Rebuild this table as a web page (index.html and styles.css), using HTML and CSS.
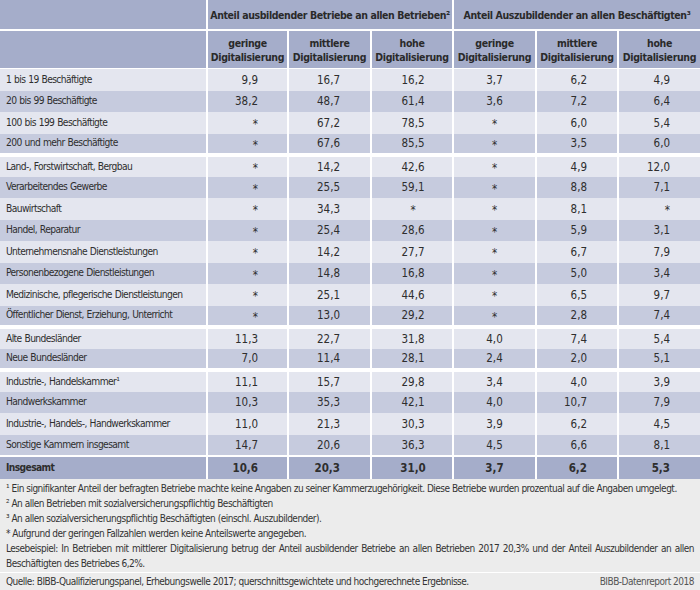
FILE: index.html
```html
<!DOCTYPE html>
<html lang="de">
<head>
<meta charset="utf-8">
<title>BIBB-Datenreport 2018</title>
<link rel="stylesheet" href="styles.css">
</head>
<body>
<div class="page">
  <table class="data">
    <colgroup>
      <col class="c-label">
      <col class="c-w81">
      <col class="c-w83">
      <col class="c-w82">
      <col class="c-w83">
      <col class="c-w82">
      <col class="c-w83">
    </colgroup>
    <thead>
      <tr class="h1">
        <th class="blank"></th>
        <th colspan="3" class="grp">Anteil ausbildender Betriebe an allen Betrieben²</th>
        <th colspan="3" class="grp">Anteil Auszubildender an allen Beschäftigten³</th>
      </tr>
      <tr class="h2">
        <th class="blank"></th>
        <th>geringe<br>Digitalisierung</th>
        <th>mittlere<br>Digitalisierung</th>
        <th>hohe<br>Digitalisierung</th>
        <th>geringe<br>Digitalisierung</th>
        <th>mittlere<br>Digitalisierung</th>
        <th>hohe<br>Digitalisierung</th>
      </tr>
    </thead>
    <tbody>
      <tr class="lt"><td>1 bis 19 Beschäftigte</td><td>9,9</td><td>16,7</td><td>16,2</td><td>3,7</td><td>6,2</td><td>4,9</td></tr>
      <tr class="dk"><td>20 bis 99 Beschäftigte</td><td>38,2</td><td>48,7</td><td>61,4</td><td>3,6</td><td>7,2</td><td>6,4</td></tr>
      <tr class="lt"><td>100 bis 199 Beschäftigte</td><td><span class="na">*</span></td><td>67,2</td><td>78,5</td><td><span class="na">*</span></td><td>6,0</td><td>5,4</td></tr>
      <tr class="dk end"><td>200 und mehr Beschäftigte</td><td><span class="na">*</span></td><td>67,6</td><td>85,5</td><td><span class="na">*</span></td><td>3,5</td><td>6,0</td></tr>
      <tr class="lt start"><td>Land-, Forstwirtschaft, Bergbau</td><td><span class="na">*</span></td><td>14,2</td><td>42,6</td><td><span class="na">*</span></td><td>4,9</td><td>12,0</td></tr>
      <tr class="dk"><td>Verarbeitendes Gewerbe</td><td><span class="na">*</span></td><td>25,5</td><td>59,1</td><td><span class="na">*</span></td><td>8,8</td><td>7,1</td></tr>
      <tr class="lt"><td>Bauwirtschaft</td><td><span class="na">*</span></td><td>34,3</td><td><span class="na">*</span></td><td><span class="na">*</span></td><td>8,1</td><td><span class="na">*</span></td></tr>
      <tr class="dk"><td>Handel, Reparatur</td><td><span class="na">*</span></td><td>25,4</td><td>28,6</td><td><span class="na">*</span></td><td>5,9</td><td>3,1</td></tr>
      <tr class="lt"><td>Unternehmensnahe Dienstleistungen</td><td><span class="na">*</span></td><td>14,2</td><td>27,7</td><td><span class="na">*</span></td><td>6,7</td><td>7,9</td></tr>
      <tr class="dk"><td>Personenbezogene Dienstleistungen</td><td><span class="na">*</span></td><td>14,8</td><td>16,8</td><td><span class="na">*</span></td><td>5,0</td><td>3,4</td></tr>
      <tr class="lt"><td>Medizinische, pflegerische Dienstleistungen</td><td><span class="na">*</span></td><td>25,1</td><td>44,6</td><td><span class="na">*</span></td><td>6,5</td><td>9,7</td></tr>
      <tr class="dk end"><td>Öffentlicher Dienst, Erziehung, Unterricht</td><td><span class="na">*</span></td><td>13,0</td><td>29,2</td><td><span class="na">*</span></td><td>2,8</td><td>7,4</td></tr>
      <tr class="lt start"><td>Alte Bundesländer</td><td>11,3</td><td>22,7</td><td>31,8</td><td>4,0</td><td>7,4</td><td>5,4</td></tr>
      <tr class="dk end"><td>Neue Bundesländer</td><td>7,0</td><td>11,4</td><td>28,1</td><td>2,4</td><td>2,0</td><td>5,1</td></tr>
      <tr class="lt start"><td>Industrie-, Handelskammer¹</td><td>11,1</td><td>15,7</td><td>29,8</td><td>3,4</td><td>4,0</td><td>3,9</td></tr>
      <tr class="dk"><td>Handwerkskammer</td><td>10,3</td><td>35,3</td><td>42,1</td><td>4,0</td><td>10,7</td><td>7,9</td></tr>
      <tr class="lt"><td>Industrie-, Handels-, Handwerkskammer</td><td>11,0</td><td>21,3</td><td>30,3</td><td>3,9</td><td>6,2</td><td>4,5</td></tr>
      <tr class="dk end-thin"><td>Sonstige Kammern insgesamt</td><td>14,7</td><td>20,6</td><td>36,3</td><td>4,5</td><td>6,6</td><td>8,1</td></tr>
      <tr class="total start-thin"><td>Insgesamt</td><td>10,6</td><td>20,3</td><td>31,0</td><td>3,7</td><td>6,2</td><td>5,3</td></tr>
    </tbody>
  </table>
  <div class="notes">
    <p>¹ Ein signifikanter Anteil der befragten Betriebe machte keine Angaben zu seiner Kammerzugehörigkeit. Diese Betriebe wurden prozentual auf die Angaben umgelegt.</p>
    <p>² An allen Betrieben mit sozialversicherungspflichtig Beschäftigten</p>
    <p>³ An allen sozialversicherungspflichtig Beschäftigten (einschl. Auszubildender).</p>
    <p>* Aufgrund der geringen Fallzahlen werden keine Anteilswerte angegeben.</p>
    <p class="example">Lesebeispiel: In Betrieben mit mittlerer Digitalisierung betrug der Anteil ausbildender Betriebe an allen Betrieben 2017 20,3% und der Anteil Auszubildender an allen Beschäftigten des Betriebes 6,2%.</p>
    <div class="source">
      <span>Quelle: BIBB-Qualifizierungspanel, Erhebungswelle 2017; querschnittsgewichtete und hochgerechnete Ergebnisse.</span>
      <span class="credit">BIBB-Datenreport 2018</span>
    </div>
  </div>
</div>
</body>
</html>
```
FILE: styles.css
```css
* { box-sizing: border-box; }
html, body { margin: 0; padding: 0; background: #ffffff; }
body {
  font-family: "DejaVu Sans Condensed", "DejaVu Sans", sans-serif;
  font-stretch: condensed;
  color: #2e2e2e;
  width: 700px;
  height: 590px;
  overflow: hidden;
}
.page { width: 700px; height: 590px; display: flex; flex-direction: column; }

.data {
  width: 700px;
  table-layout: fixed;
  border-collapse: separate;
  border-spacing: 0;
  font-size: 11.5px;
  flex: none;
}
.c-label { width: 206px; }
.c-w81 { width: 81px; }
.c-w82 { width: 82px; }
.c-w83 { width: 83px; }

.data th, .data td { padding: 0; }
.data th + th, .data td + td { border-left: 2px solid #ffffff; }

.h1 th {
  background: #a5adca;
  height: 31px;
  border-bottom: 2px solid #ffffff;
  font-weight: bold;
  font-size: 10.5px;
  letter-spacing: -0.4px;
  color: #2a2a2a;
  text-align: center;
  vertical-align: middle;
  white-space: nowrap;
}
.h2 th {
  background: #a5adca;
  height: 38px;
  border-bottom: 1px solid #ffffff;
  font-weight: bold;
  font-size: 10.5px;
  letter-spacing: -0.35px;
  line-height: 14px;
  color: #2a2a2a;
  text-align: center;
  vertical-align: middle;
}
.data td {
  height: 21.5px;
  line-height: 14px;
  vertical-align: middle;
  white-space: nowrap;
}
.data td:first-child {
  padding-left: 6px;
  font-size: 10.2px;
  letter-spacing: -0.6px;
  word-spacing: 0.5px;
}
.data td:nth-child(2) { text-align: right; padding-right: 29px; }
.data td:nth-child(3) { text-align: right; padding-right: 30px; }
.data td:nth-child(4) { text-align: center; padding-left: 2px; }
.data td:nth-child(5) { text-align: center; }
.data td:nth-child(6) { text-align: right; padding-right: 30px; }
.data td:nth-child(7) { text-align: right; padding-right: 30px; }

.lt td { background: #e4e6ef; }
.dk td { background: #c6cbde; }
.total td { background: #a5adca; font-weight: bold; height: 23px; }

.end td { border-bottom: 2px solid #ffffff; }
.start td { border-top: 2px solid #ffffff; }
.end-thin td { border-bottom: 1px solid #ffffff; }
.start-thin td { border-top: 1px solid #ffffff; }

.na { vertical-align: -3px; }

.notes {
  background: #ececec;
  flex: 1;
  padding: 2px 6px 0 6px;
  font-size: 10px;
  letter-spacing: -0.5px;
  line-height: 15px;
  color: #333333;
}
.notes p { margin: 0; }
.example { text-align: justify; }
.source {
  display: flex;
  justify-content: space-between;
  border-top: 1px solid #ffffff;
  margin: 1px -6px 0;
  padding: 1px 6px 0;
}
.credit { color: #555555; }
```
